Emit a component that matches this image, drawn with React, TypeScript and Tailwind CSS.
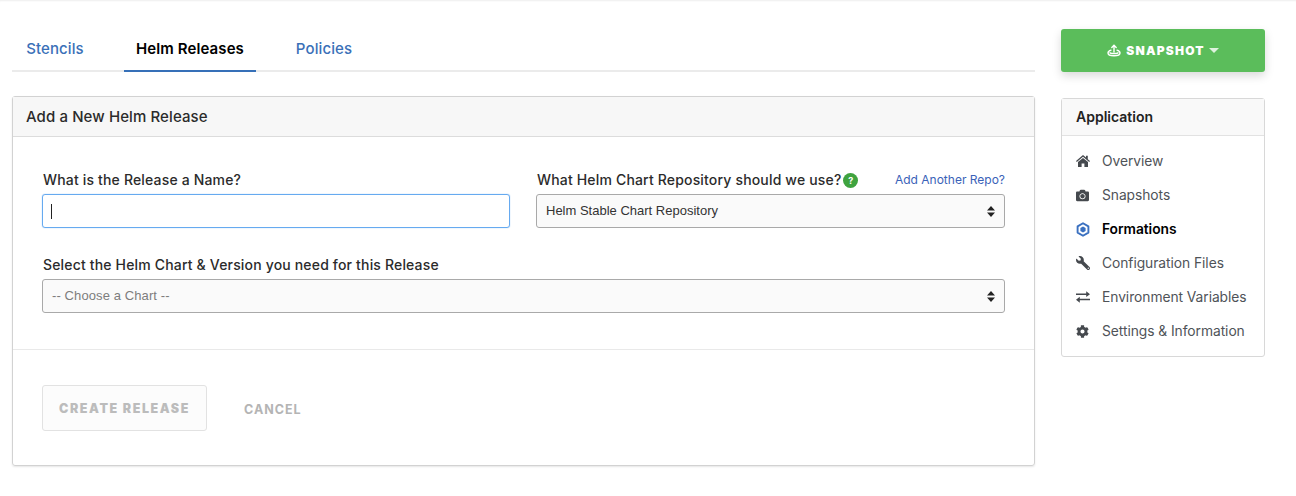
import React from "react";
import { FaCamera, FaWrench, FaCog } from "react-icons/fa";

function Hex() {
  return (
    <svg width="14" height="15" viewBox="0 0 14 15" fill="none">
      <path d="M7 1.3 L12.4 4.4 V10.6 L7 13.7 L1.6 10.6 V4.4 Z" stroke="#3a70c0" strokeWidth="1.9" strokeLinejoin="round" />
      <path d="M7 4.6 L9.6 6 V9 L7 10.4 L4.4 9 V6 Z" fill="#3a70c0" />
    </svg>
  );
}

function Home() {
  return (
    <svg width="14" height="12" viewBox="0 0 14 12" fill="#45494e">
      <path d="M7 0 L10 2.6 V0.8 H11.8 V4.2 L14 6.1 L13.2 7 L7 1.7 L0.8 7 L0 6.1 Z" />
      <path d="M7 2.9 L12 7.1 V12 H8.4 V8.6 H5.6 V12 H2 V7.1 Z" />
    </svg>
  );
}

function Exchange() {
  return (
    <svg width="14" height="12" viewBox="0 0 14 12" fill="#45494e">
      <path d="M0 2.4 H10.2 V0.2 L14 3.2 L10.2 6 V4 H0 Z" />
      <path d="M14 7.7 H3.8 V5.8 L0 8.8 L3.8 11.8 V9.3 H14 Z" />
    </svg>
  );
}

function Anchor() {
  return (
    <svg width="14" height="13" viewBox="0 0 14 13" fill="none" stroke="#fff" strokeWidth="1.4" strokeLinecap="round" strokeLinejoin="round">
      <path d="M7 8 V1.5" />
      <path d="M4.8 3.4 L7 1.2 L9.2 3.4" />
      <path d="M4 6.2 C2 6.8 1 7.8 1 9 C1 10.8 3.5 11.8 7 11.8 C10.5 11.8 13 10.8 13 9 C13 7.8 12 6.8 10 6.2" />
      <path d="M3 8.8 C4.5 9.8 9.5 9.8 11 8.8" />
    </svg>
  );
}

function Updown() {
  return (
    <svg width="8" height="11" viewBox="0 0 8 11" className="shrink-0">
      <path d="M4 0 L8 4.4 H0 Z M4 11 L0 6.6 H8 Z" fill="#222" />
    </svg>
  );
}

const nav = [
  { label: "Overview", icon: <Home /> },
  { label: "Snapshots", icon: <FaCamera size={13} /> },
  { label: "Formations", icon: <Hex />, active: true },
  { label: "Configuration Files", icon: <FaWrench size={14} className="-scale-x-100" /> },
  { label: "Environment Variables", icon: <Exchange /> },
  { label: "Settings & Information", icon: <FaCog size={13} /> },
];

function Select({ text, muted }: { text: string; muted?: boolean }) {
  return (
    <div className={`flex h-[34px] items-center justify-between rounded-[3px] border border-[#a9a9a9] bg-[#fafafa] pl-[9px] pr-[9px] font-['Liberation_Sans',sans-serif] text-[13px] ${muted ? "tracking-[0.1px] text-[#7d7d7d]" : "text-[#333]"}`}>
      <span>{text}</span>
      <Updown />
    </div>
  );
}

export default function App() {
  return (
    <div className="h-[496px] w-[1296px] overflow-hidden bg-white font-['Inter',sans-serif] shadow-[inset_0_2px_2px_-1px_rgba(0,0,0,0.07)]">
      <div className="flex gap-[26px] pl-[12px] pt-[29px]">
        <main className="w-[1023px]">
          <div className="flex h-[43px] border-b-2 border-[#ebebeb] text-[15px] tracking-[0.1px]">
            <a className="flex h-[43px] w-[86px] items-center justify-center pb-[3px] font-medium text-[#3a70b8]">Stencils</a>
            <span className="w-[26px]"></span>
            <a className="flex h-[43px] w-[132px] items-center justify-center border-b-2 border-[#3670b8] pb-[1px] font-semibold text-black">Helm Releases</a>
            <a className="flex h-[43px] w-[136px] items-center justify-center pb-[3px] font-medium text-[#3a70b8]">Policies</a>
          </div>
          <section className="mt-[24px] h-[370px] rounded-[3px] border border-[#d2d2d2] shadow-[0_1px_2px_rgba(0,0,0,0.1)]">
            <header className="flex h-[40px] items-center border-b border-[#dcdcdc] bg-[#f7f7f7] pl-[13px] pt-[1px] text-[15px] font-medium tracking-[0.1px] text-[#2b2b2b]">
              Add a New Helm Release
            </header>
            <div className="h-[213px] border-b border-[#e9e9e9] px-[29px] pt-[34px]">
              <div className="flex gap-[26px]">
                <div className="w-[468px]">
                  <label className="block h-[23px] pl-px text-[14px] font-medium leading-[18px] tracking-[0.17px] text-[#2b2b2b]">What is the Release a Name?</label>
                  <div className="flex h-[34px] items-center rounded-[3px] border border-[#66aaf0] pl-[8px] shadow-[0_0_1px_#66aaf0]">
                    <span className="h-[15px] w-px bg-[#222]"></span>
                  </div>
                </div>
                <div className="w-[469px]">
                  <div className="flex h-[23px] items-start justify-between">
                    <label className="flex items-center pl-px text-[14px] font-medium leading-[18px] tracking-[0.17px] text-[#2b2b2b]">
                      What Helm Chart Repository should we use?
                      <span className="ml-[2px] flex h-[15px] w-[15px] items-center justify-center rounded-full bg-[#3fa33f] text-[9px] font-bold leading-none text-white">?</span>
                    </label>
                    <a className="text-[12px] leading-[18px] text-[#3a62b8]">Add Another Repo?</a>
                  </div>
                  <Select text="Helm Stable Chart Repository" />
                </div>
              </div>
              <label className="mt-[28px] block h-[23px] pl-px text-[14px] font-medium leading-[18px] tracking-[0.17px] text-[#2b2b2b]">Select the Helm Chart &amp; Version you need for this Release</label>
              <Select text="-- Choose a Chart --" muted />
            </div>
            <div className="flex items-center px-[29px] pt-[35px]">
              <button className="h-[46px] w-[165px] rounded-[3px] border border-[#e2e2e2] bg-[#fcfcfc] pt-[3px] text-[12.5px] font-black tracking-[1.55px] text-[#bcbcbc]">CREATE RELEASE</button>
              <span className="ml-[37px] pt-[5px] text-[12.5px] font-bold tracking-[1px] text-[#b4b4b4]">CANCEL</span>
            </div>
          </section>
        </main>
        <aside className="w-[204px]">
          <button className="flex h-[43px] w-full items-center justify-center rounded-[3px] bg-[#5bbd5b] text-[12px] font-black tracking-[1.2px] text-white shadow-[0_4px_10px_rgba(0,0,0,0.15)]">
            <Anchor />
            <span className="ml-[5px]">SNAPSHOT</span>
            <span className="ml-[4px] h-0 w-0 border-x-[5px] border-t-[5px] border-x-transparent border-t-white/80"></span>
          </button>
          <div className="mt-[26px] h-[259px] rounded-[3px] border border-[#d8d8d8]">
            <div className="flex h-[37px] items-center border-b border-[#e2e2e2] bg-[#f9f9f9] pb-[1px] pl-[14px] text-[14px] font-semibold text-[#222]">Application</div>
            <ul className="pt-[8px]">
              {nav.map((n) => (
                <li key={n.label} className={`flex h-[34px] items-center pl-[14px] text-[13.8px] tracking-[-0.05px] ${n.active ? "font-semibold text-black" : "text-[#4f5358]"}`}>
                  <span className="flex w-[26px] text-[#45494e]">{n.icon}</span>
                  {n.label}
                </li>
              ))}
            </ul>
          </div>
        </aside>
      </div>
    </div>
  );
}
